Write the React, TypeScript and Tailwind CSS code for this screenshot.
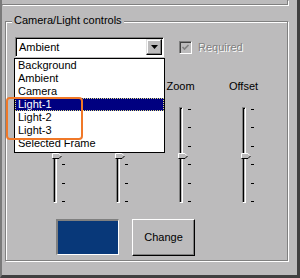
import React from 'react';

const items = ['Background', 'Ambient', 'Camera', 'Light-1', 'Light-2', 'Light-3', 'Selected Frame'];

// first two labels sit under the open list, so they are left blank
const sliders = [
  { id: 'a', label: '' },
  { id: 'b', label: '' },
  { id: 'c', label: 'Zoom' },
  { id: 'd', label: 'Offset' },
];

const Thumb = () => (
  <svg width="10" height="6" viewBox="0 0 10 6" className="absolute left-[-2px] top-[45px]">
    <path d="M0 0H7L10 3L7 6H0Z" fill="#bcbbbc" />
    <path d="M0.5 5.5V0.5H6.8L8.8 2.5" fill="none" stroke="#fff" />
    <path d="M0.5 5.5H7L9.5 3" fill="none" stroke="#000" />
  </svg>
);

const Slider = ({ label }: { label: string }) => (
  <div className="w-[63px] flex-none flex flex-col">
    <div className="h-[13px] text-center leading-[13px]">{label}</div>
    <div className="mt-[14px] ml-[30px] flex">
      <div className="relative h-[96px] w-[4px] border-l border-t border-[#808080] border-r border-r-white border-b border-b-white shadow-[inset_1px_1px_0_#000]">
        <Thumb />
      </div>
      <div className="ml-[5px] mt-[2px] flex h-[93px] flex-col justify-between">
        {[0, 1, 2, 3, 4, 5].map((i) => (
          <div key={i} className="h-px w-[3px] bg-black" />
        ))}
      </div>
    </div>
  </div>
);

export default function App() {
  return (
    <div className="h-[278px] w-[300px] overflow-hidden border-l-2 border-r-3 border-b-3 border-l-[#7a7a7a] border-r-[#404040] border-b-[#404040] bg-[#bcbbbc] text-[11px] leading-[13px] text-black [font-family:'Liberation_Sans',Arial,sans-serif]">
      {/* bottom edge of the group above */}
      <div className="h-[5px] w-[286px] border-b border-r border-[#808080] shadow-[1px_1px_0_#fff]" />

      <div className="relative ml-[3px] mt-[16px] h-[240px] w-[283px] border border-[#808080] shadow-[inset_1px_1px_0_#fff,1px_1px_0_#fff] pl-[9px] pt-[15px]">
        <div className="absolute left-[6px] top-[-8px] bg-[#bcbbbc] px-[2px]">Camera/Light controls</div>

        <div className="flex items-center">
          <div className="flex h-[20px] w-[149px] items-center justify-between border border-t-[#808080] border-l-[#808080] border-b-white border-r-white bg-white shadow-[inset_1px_1px_0_#000] pl-[3px] pr-px">
            <span className="pt-px">Ambient</span>
            <div className="flex h-[16px] w-[16px] items-center justify-center border border-t-[#dfdfdf] border-l-[#dfdfdf] border-b-black border-r-black bg-[#bcbbbc] shadow-[inset_-1px_-1px_0_#808080,inset_1px_1px_0_#fff]">
              <svg width="7" height="4" viewBox="0 0 7 4">
                <path d="M0 0H7L3.5 4Z" fill="#000" />
              </svg>
            </div>
          </div>
          <div className="ml-[15px] flex h-[13px] w-[13px] items-center justify-center border border-t-[#808080] border-l-[#808080] border-b-white border-r-white shadow-[inset_1px_1px_0_#404040]">
            <svg width="9" height="9" viewBox="0 0 9 9">
              <path d="M1.5 4L3.5 6L7.5 2" fill="none" stroke="#808080" strokeWidth="1.6" />
            </svg>
          </div>
          <span className="ml-[6px] text-[#808080] [text-shadow:1px_1px_0_#fff]">Required</span>
        </div>

        <div className="mt-[23px] ml-[8px] flex">
          {sliders.map((s) => (
            <Slider key={s.id} label={s.label} />
          ))}
        </div>

        <div className="mt-[16px] ml-[41px] flex items-start gap-[13px]">
          <div className="h-[36px] w-[63px] border-t-2 border-l-2 border-b border-r border-t-[#808080] border-l-[#808080] border-b-white border-r-white bg-[#083879]" />
          <button className="h-[37px] w-[63px] border border-t-white border-l-white border-b-black border-r-black bg-[#bcbbbc] shadow-[inset_-1px_-1px_0_#808080]">
            Change
          </button>
        </div>

        {/* open dropdown list */}
        <div className="absolute left-[8px] top-[36px] w-[151px] border border-black bg-white">
          {items.map((it) => (
            <div
              key={it}
              className={
                it === 'Light-1'
                  ? 'h-[13px] border border-dotted border-[#e0e080] bg-[#000080] pl-[2px] leading-[11px] text-white'
                  : 'h-[13px] pl-[3px] leading-[13px]'
              }
            >
              {it}
            </div>
          ))}
          <div className="h-[2px]" />
        </div>

        {/* annotation */}
        <div className="absolute left-0 top-[75px] h-[43px] w-[77px] rounded-[4px] border-2 border-[#f07828]" />
      </div>
    </div>
  );
}
